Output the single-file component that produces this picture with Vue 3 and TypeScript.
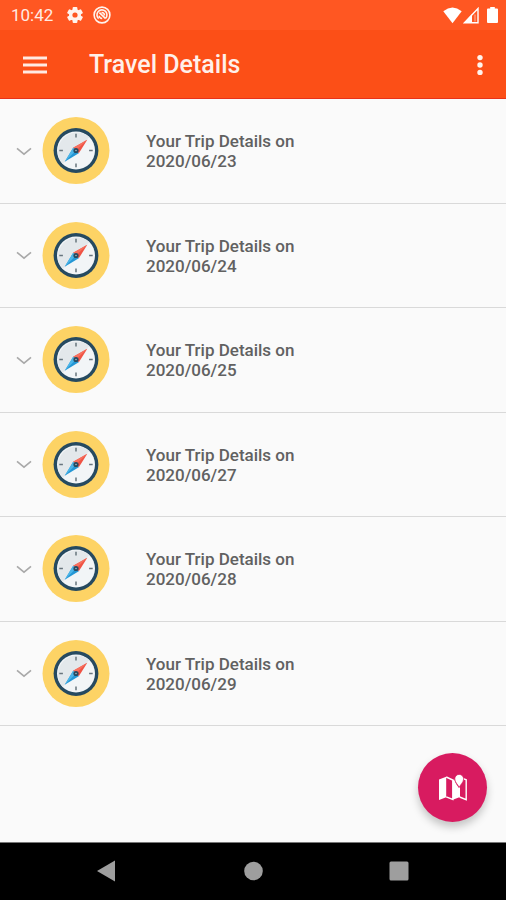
<script setup lang="ts">
import { ref } from 'vue'

interface Trip {
  id: number
  date: string
}

const trips: Trip[] = [
  { id: 1, date: '2020/06/23' },
  { id: 2, date: '2020/06/24' },
  { id: 3, date: '2020/06/25' },
  { id: 4, date: '2020/06/27' },
  { id: 5, date: '2020/06/28' },
  { id: 6, date: '2020/06/29' },
]

const openTrip = ref<number | null>(null)

function toggle(id: number): void {
  openTrip.value = openTrip.value === id ? null : id
}
</script>

<template>
  <div class="screen">
    <div class="status">
      <span class="clock">10:42</span>
      <svg class="gear" width="16" height="16" viewBox="0 0 16 16" aria-hidden="true">
        <g fill="#fff4ee">
          <rect v-for="a in [0, 60, 120]" :key="a" x="5.6" y="0" width="4.8" height="16" rx="1" :transform="`rotate(${a} 8 8)`" />
          <circle cx="8" cy="8" r="6" />
        </g>
        <circle cx="8" cy="8" r="2.6" fill="#ff5722" />
      </svg>
      <svg width="18" height="18" viewBox="0 0 18 18" fill="none" stroke="#fff4ee" aria-hidden="true">
        <circle cx="9" cy="9" r="7.9" stroke-width="1.6" />
        <path d="M5.6 12.6A5 5 0 1 1 12.6 12.3" stroke-width="1.6" />
        <path d="M6.4 6.6L12.6 12.6M6.2 9.8a2.7 2.7 0 0 0 3 2.6M8.5 6.5a3 3 0 0 1 3 3" stroke-width="1.6" />
      </svg>
      <span class="spacer"></span>
      <svg width="19" height="17" viewBox="0 0 19 17" aria-hidden="true">
        <path d="M0.3 4.2Q9.5-3 18.7 4.2L9.5 16.2Z" fill="#fff" />
      </svg>
      <svg class="signal" width="16" height="17" viewBox="0 0 16 17" aria-hidden="true">
        <path d="M15 1.5V15.7H1.4Z" fill="none" stroke="#fff" stroke-width="1.4" />
        <path d="M9 7.2V16H1Z" fill="#fff" />
        <path d="M12 7.5v7" stroke="#ffb59e" stroke-width="1" />
      </svg>
      <svg class="battery" width="11" height="18" viewBox="0 0 11 18" aria-hidden="true">
        <path d="M3.2 1h4.6v1.4H10a1 1 0 0 1 1 1v12.6a1 1 0 0 1-1 1H1a1 1 0 0 1-1-1V3.4a1 1 0 0 1 1-1h2.2Z" fill="#fff" />
      </svg>
    </div>

    <header class="bar">
      <button class="icon-button" type="button" aria-label="Open menu">
        <svg width="24" height="18" viewBox="0 0 24 18">
          <path d="M0 2h24M0 9h24M0 16h24" stroke="#ffeae2" stroke-width="2.8" />
        </svg>
      </button>
      <h1 class="title">Travel Details</h1>
      <button class="icon-button" type="button" aria-label="More options">
        <svg width="6" height="22" viewBox="0 0 6 22" fill="#fff4ee">
          <circle cx="3" cy="3.6" r="2.7" />
          <circle cx="3" cy="11" r="2.7" />
          <circle cx="3" cy="18.4" r="2.7" />
        </svg>
      </button>
    </header>

    <main class="content">
      <ul class="trips">
        <li v-for="trip in trips" :key="trip.id" class="trip">
          <button class="trip-button" type="button" :aria-expanded="openTrip === trip.id" @click="toggle(trip.id)">
            <svg class="chevron" width="16" height="9" viewBox="0 0 16 9" aria-hidden="true">
              <path d="M1 1.3L8 7.1L15 1.3" fill="none" stroke="#a9a9a9" stroke-width="1.6" />
            </svg>
            <svg class="compass" width="68" height="68" viewBox="0 0 68 68" aria-hidden="true">
              <circle cx="34" cy="33.5" r="33.5" fill="#fdd365" />
              <circle cx="34" cy="33.5" r="22.4" fill="#264a60" />
              <g transform="translate(0 -0.5)">
                <circle cx="34" cy="34" r="19" fill="#f2f5f7" />
                <path d="M20.6 47.4A19 19 0 0 1 47.4 20.6Z" fill="#e3e8eb" />
                <path d="M34 17.3v3.6M34 47.1v3.6M17.3 34h3.6M47.1 34h3.6" stroke="#68757e" stroke-width="1.5" />
                <path d="M45.3 23.2L36.8 36.8L31.2 31.2Z" fill="#ef5345" />
                <path d="M45.3 23.2L34 34L31.2 31.2Z" fill="#f7705e" />
                <path d="M22.7 45.2L31.2 31.2L36.8 36.8Z" fill="#2497d5" />
                <path d="M22.7 45.2L31.2 31.2L34 34Z" fill="#4db5e8" />
                <circle cx="34" cy="34" r="2.6" fill="#264a60" />
                <circle cx="34" cy="34" r="0.8" fill="#a9bac5" />
              </g>
            </svg>
            <span class="label">
              <span>Your Trip Details on</span>
              <span>{{ trip.date }}</span>
            </span>
          </button>
        </li>
      </ul>
      <button class="fab" type="button" aria-label="Show map">
        <svg width="30" height="28" viewBox="0 0 30 28">
          <path d="M1 5.4L8.2 2.7V23.2L1 26Z" fill="#fff" />
          <path d="M8.2 3L14.8 6V25.5L8.2 22.8" fill="none" stroke="#fff" stroke-width="1.4" />
          <path d="M14.8 6L16.3 5.4C17 9 19.5 11.5 21 14L22 12.5V23L14.8 25.7Z" fill="#fff" />
          <path d="M25.3 4.6L28.2 5.8V25.6L21.6 23" fill="none" stroke="#fff" stroke-width="1.4" />
          <path d="M21.2 13.3C19.8 10.3 16.8 8.4 16.8 4.8A4.4 4.4 0 0 1 25.6 4.8C25.6 8.4 22.6 10.3 21.2 13.3Z" fill="#fff" stroke="#d81b60" stroke-width="0.7" />
        </svg>
      </button>
    </main>

    <nav class="system" aria-label="System navigation">
      <button type="button" aria-label="Back">
        <svg width="20" height="22" viewBox="0 0 20 22"><path d="M0 11L18 0.5V21.5Z" fill="#9e9e9e" /></svg>
      </button>
      <button type="button" aria-label="Home">
        <svg width="20" height="20" viewBox="0 0 20 20"><circle cx="10.5" cy="10" r="9.3" fill="#9e9e9e" /></svg>
      </button>
      <button type="button" aria-label="Recent apps">
        <svg width="20" height="20" viewBox="0 0 20 20"><rect x="0.5" y="0.5" width="19" height="19" rx="1.5" fill="#9e9e9e" /></svg>
      </button>
    </nav>
  </div>
</template>

<style>
body {
  margin: 0;
  background: #fafafa;
}
</style>

<style scoped>
.screen {
  display: flex;
  flex-direction: column;
  min-height: 100vh;
  background: #fafafa;
  font-family: Roboto, "Liberation Sans", sans-serif;
}

button {
  margin: 0;
  padding: 0;
  border: 0;
  background: none;
  font: inherit;
  color: inherit;
  cursor: pointer;
}

svg {
  display: block;
  flex: none;
}

.status {
  display: flex;
  align-items: center;
  height: 30px;
  padding: 0 8px 0 11px;
  background: #ff5722;
  color: #ffeae2;
}

.clock {
  font-size: 17px;
  line-height: 30px;
}

.gear {
  margin: 0 10px 0 14px;
}

.spacer {
  flex: 1;
}

.signal {
  margin: 0 8px 0 1px;
}

.bar {
  display: flex;
  align-items: center;
  box-sizing: border-box;
  height: 69px;
  padding-top: 2px;
  border-bottom: 1px solid #e8321a;
  background: #fc4f17;
  color: #fff0ea;
}

.icon-button {
  display: flex;
  align-items: center;
  justify-content: center;
  width: 69px;
  height: 64px;
}

.icon-button:last-child {
  width: 52px;
}

.title {
  flex: 1;
  margin: 0;
  padding-left: 20px;
  font-size: 25px;
  font-weight: 500;
  line-height: 32px;
}

.content {
  position: relative;
  flex: 1;
}

.trips {
  margin: 0;
  padding: 0;
  list-style: none;
}

.trip {
  box-sizing: border-box;
  height: 105px;
  border-bottom: 1px solid #d9d9d9;
}

.trip:nth-child(even) {
  height: 104px;
}

.trip-button {
  display: flex;
  align-items: center;
  width: 100%;
  height: 100%;
  padding: 0 16px;
  text-align: left;
}

.chevron {
  margin-right: 10px;
}

.trip-button[aria-expanded="true"] .chevron {
  transform: rotate(180deg);
}

.label {
  display: flex;
  flex-direction: column;
  padding-left: 36px;
  color: #616161;
  font-size: 17px;
  font-weight: 500;
  line-height: 20px;
}

.fab {
  position: absolute;
  right: 19px;
  bottom: 20px;
  display: flex;
  align-items: center;
  justify-content: center;
  width: 69px;
  height: 69px;
  border-radius: 50%;
  background: #d81b60;
  box-shadow: 0 5px 8px rgba(0, 0, 0, 0.22);
}

.system {
  display: grid;
  grid-template-columns: repeat(3, 146px);
  justify-content: center;
  box-sizing: border-box;
  height: 58px;
  padding-bottom: 1px;
  border-top: 1px solid #777;
  background: #000;
}

.system button {
  display: flex;
  align-items: center;
  justify-content: center;
}
</style>
